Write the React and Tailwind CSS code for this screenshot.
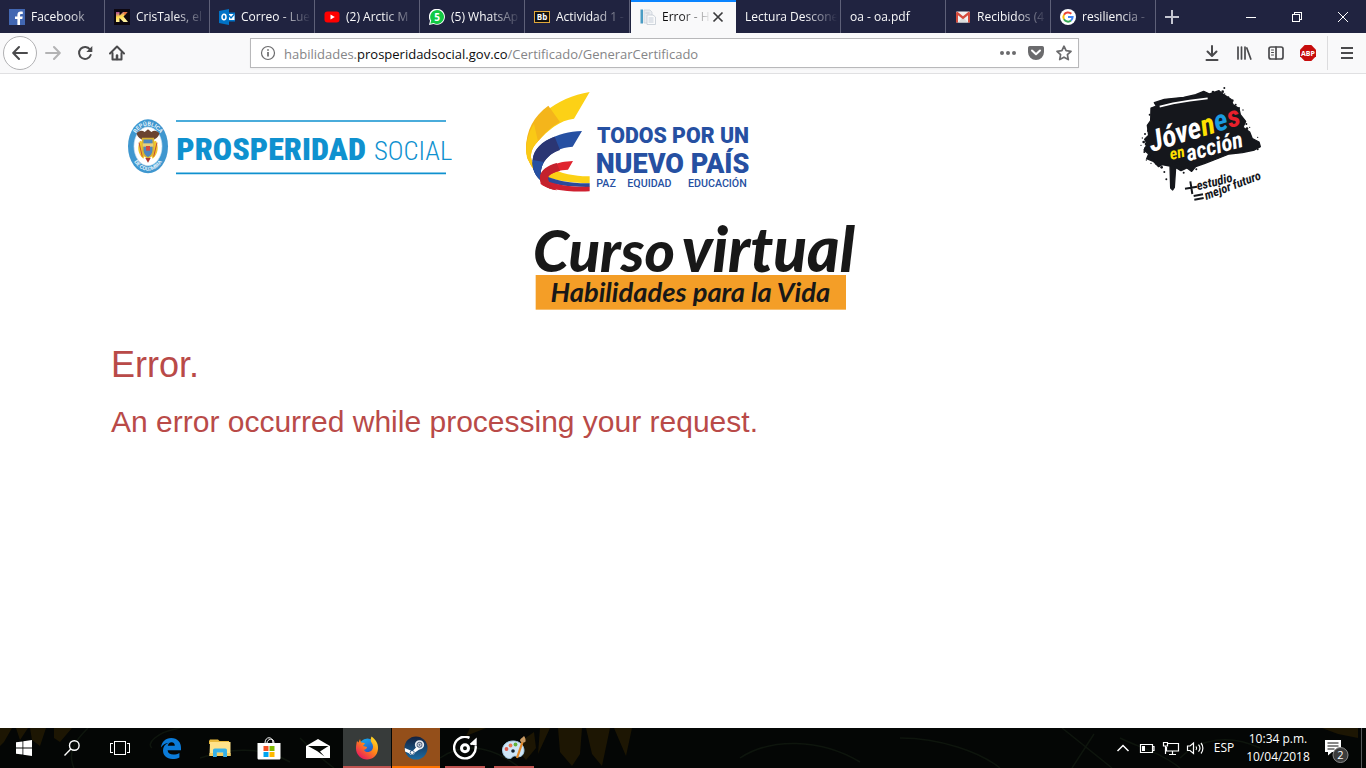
import React from "react";

const uiFont = "font-['Open_Sans','Noto_Sans',sans-serif]";

/* ---------- Tab icons ---------- */

const FacebookIcon = () => (
  <svg viewBox="0 0 16 16" className="size-4 shrink-0" aria-hidden="true">
    <rect width="16" height="16" fill="#4267b2" />
    <path d="M11 16V10h2.3l.4-2.5H11V6.2c0-.8.4-1.3 1.4-1.3h1.4V2.7c-.4-.1-1.1-.2-2-.2C9.700 2.500 8.400 3.700 8.400 5.900v1.600H6V10h2.400v6z" fill="#fff" />
  </svg>
);

const KIcon = () => (
  <svg viewBox="0 0 16 16" className="size-4 shrink-0" aria-hidden="true">
    <defs>
      <linearGradient id="kGrad" x1="0" y1="0" x2="0.3" y2="1">
        <stop offset="0" stopColor="#a33a9c" />
        <stop offset="0.5" stopColor="#ffd84a" />
        <stop offset="1" stopColor="#fff2a0" />
      </linearGradient>
    </defs>
    <rect width="16" height="16" fill="#0d0710" />
    <path d="M2 3h3.500v3.500L9 3h4.500L9.500 7.500 14 13H9.500L5.500 9v4H2z" fill="url(#kGrad)" />
    <path d="M10 3h3.500l-3 3.500z" fill="#e9703b" />
  </svg>
);

const OutlookIcon = () => (
  <svg viewBox="0 0 16 16" className="size-4 shrink-0" aria-hidden="true">
    <rect x="8" y="3.500" width="8" height="9" fill="#0072c6" />
    <path d="M10 5h5.500v6H10z" fill="#fff" />
    <path d="M10 6.500l2 2.500 3.500-4" fill="none" stroke="#0072c6" strokeWidth="1.300" />
    <path d="M0 2l10-2v16L0 14z" fill="#0072c6" />
    <ellipse cx="5" cy="8" rx="2" ry="2.700" fill="none" stroke="#fff" strokeWidth="1.500" />
  </svg>
);

const YoutubeIcon = () => (
  <svg viewBox="0 0 16 16" className="size-4 shrink-0" aria-hidden="true">
    <rect x="0.500" y="2.500" width="15" height="11" rx="3" fill="#f00" />
    <path d="M6.500 5.500v5L10.800 8z" fill="#fff" />
  </svg>
);

const WhatsappIcon = () => (
  <svg viewBox="0 0 16 16" className="size-4 shrink-0" aria-hidden="true">
    <path d="M0 16l1-4.200A8 8 0 1 1 4.500 15z" fill="#fff" />
    <path d="M1.300 14.700l.9-3.100A6.900 6.900 0 1 1 4.700 14z" fill="#12c943" />
    <text x="8" y="11.500" textAnchor="middle" className="font-['Open_Sans',sans-serif] text-[10px] font-bold" fill="#fff">5</text>
  </svg>
);

const BlackboardIcon = () => (
  <svg viewBox="0 0 16 16" className="size-4 shrink-0" aria-hidden="true">
    <rect x="0.500" y="2.500" width="15" height="11" fill="#111" stroke="#e0a83a" />
    <text x="8" y="11" textAnchor="middle" className="font-['Open_Sans',sans-serif] text-[8px] font-bold" fill="#fff">Bb</text>
  </svg>
);

const PageIcon = () => (
  <svg viewBox="0 0 16 16" className="size-4 shrink-0" aria-hidden="true">
    <rect x="0.500" y="0.500" width="2.500" height="14" fill="#4a9cc4" />
    <path d="M4 1h6l2 2v11H4z" fill="#e9ecf0" stroke="#cdd3db" strokeWidth="0.800" />
    <path d="M7 6h6l2.500 2v7.500H7z" fill="#fafbfc" stroke="#c3cad3" strokeWidth="0.800" />
    <path d="M8.500 9h5M8.500 11h5M8.500 13h5M5.500 4h4" stroke="#b9c3cf" strokeWidth="0.800" />
  </svg>
);

const GmailIcon = () => (
  <svg viewBox="0 0 16 16" className="size-4 shrink-0" aria-hidden="true">
    <rect x="1" y="2.500" width="14" height="11" rx="1" fill="#f2f2f2" />
    <path d="M3 13.500L8 8l5 5.500z" fill="#dcdcdc" />
    <path d="M1 3.500v10h2V6.200l5 4 5-4v7.300h2v-10l-1.400-.8L8 7.300 2.400 2.700z" fill="#d54b3d" />
  </svg>
);

const GoogleIcon = () => (
  <svg viewBox="0 0 16 16" className="size-4 shrink-0" aria-hidden="true">
    <circle cx="8" cy="8" r="8" fill="#fff" />
    <g fill="none" strokeWidth="2">
      <path d="M4 5.700A4.600 4.600 0 0 1 11.300 4.800" stroke="#ea4335" />
      <path d="M4 10.300A4.600 4.600 0 0 1 4 5.700" stroke="#fbbc05" />
      <path d="M11 11.500A4.600 4.600 0 0 1 4 10.300" stroke="#34a853" />
      <path d="M8 8.100h4.600A4.600 4.600 0 0 1 11 11.500" stroke="#4285f4" />
    </g>
  </svg>
);

const tabs = [
  { label: "Facebook", Icon: FacebookIcon },
  { label: "CrisTales, el", Icon: KIcon },
  { label: "Correo - Lue", Icon: OutlookIcon },
  { label: "(2) Arctic M", Icon: YoutubeIcon },
  { label: "(5) WhatsAp", Icon: WhatsappIcon },
  { label: "Actividad 1 -", Icon: BlackboardIcon },
  { label: "Error - H", Icon: PageIcon, active: true },
  { label: "Lectura Descone" },
  { label: "oa - oa.pdf" },
  { label: "Recibidos (4", Icon: GmailIcon },
  { label: "resiliencia -", Icon: GoogleIcon },
];

function Tab({ label, Icon, active }) {
  return (
    <div
      className={
        active
          ? "ml-px flex h-full min-w-0 max-w-[105px] flex-1 items-center border-t-2 border-[#0a84ff] bg-[#f9f9fa] pb-[2px] pl-[9px] pr-3 text-[#0c0c0d]"
          : "flex h-full min-w-0 max-w-[105px] flex-1 items-center border-r border-[#5e6078] pl-[9px] pr-[3px] text-[#f9f9fa]"
      }
    >
      <button role="tab" aria-selected={!!active} className="flex min-w-0 flex-1 items-center gap-[6px] text-left">
        {Icon && <Icon />}
        <span className="min-w-0 flex-1 overflow-hidden whitespace-nowrap text-[12px] leading-4 [mask-image:linear-gradient(to_left,transparent,black_32px)]">
          {label}
        </span>
      </button>
      {active && (
        <button aria-label="Cerrar pestaña" className="shrink-0">
          <svg viewBox="0 0 12 12" className="size-3" fill="none" stroke="#3b3b3d" strokeWidth="1.700">
            <path d="M1.500 1.500l9 9M10.500 1.500l-9 9" />
          </svg>
        </button>
      )}
    </div>
  );
}

function TabBar() {
  return (
    <div className="flex h-[33px] bg-[#202340]">
      <div role="tablist" className="flex min-w-0 flex-1">
        {tabs.map((t) => (
          <Tab key={t.label} {...t} />
        ))}
        <button aria-label="Nueva pestaña" className="flex w-8 shrink-0 items-center justify-center">
          <svg viewBox="0 0 14 14" className="size-[14px]" stroke="#c5c6d2" strokeWidth="2">
            <path d="M7 0v14M0 7h14" />
          </svg>
        </button>
      </div>
      <div className="flex shrink-0">
        <button aria-label="Minimizar" className="flex w-[46px] items-center justify-center">
          <svg viewBox="0 0 10 10" className="size-[10px]" stroke="#fff" shapeRendering="crispEdges"><path d="M0 5.500h10" /></svg>
        </button>
        <button aria-label="Restaurar" className="flex w-[46px] items-center justify-center">
          <svg viewBox="0 0 10 10" className="size-[10px]" fill="none" stroke="#fff" shapeRendering="crispEdges">
            <path d="M0.500 2.500h7v7h-7zM2.500 2.500v-2h7v7h-2" />
          </svg>
        </button>
        <button aria-label="Cerrar" className="flex w-[46px] items-center justify-center">
          <svg viewBox="0 0 10 10" className="size-[10px]" stroke="#fff"><path d="M0 0l10 10M10 0L0 10" /></svg>
        </button>
      </div>
    </div>
  );
}

function ToolButton({ label, children, className = "w-8" }) {
  return (
    <button aria-label={label} className={"flex h-8 shrink-0 items-center justify-center text-[#4a4a4c] " + className}>
      <svg viewBox="0 0 16 16" className="size-4" fill="none" stroke="currentColor" strokeWidth="2" strokeLinecap="round" strokeLinejoin="round">
        {children}
      </svg>
    </button>
  );
}

function Toolbar() {
  return (
    <div className="flex h-[41px] items-center border-b border-[#e0e0e2] bg-[#f9f9fa]">
      <div className="flex w-[250px] shrink-0 items-center pl-[3px]">
        <button aria-label="Atrás" className="flex size-[34px] items-center justify-center rounded-full border border-[#b1b1b3] bg-white text-[#4a4a4c]">
          <svg viewBox="0 0 16 16" className="size-4" fill="none" stroke="currentColor" strokeWidth="2" strokeLinecap="round" strokeLinejoin="round">
            <path d="M15 8H1.500M7 2L1.200 8 7 14" />
          </svg>
        </button>
        <button aria-label="Adelante" disabled className="flex size-8 items-center justify-center text-[#b3b3b4]">
          <svg viewBox="0 0 16 16" className="size-4" fill="none" stroke="currentColor" strokeWidth="2" strokeLinecap="round" strokeLinejoin="round">
            <path d="M1 8h13.500M9 2l5.800 6L9 14" />
          </svg>
        </button>
        <ToolButton label="Recargar">
          <path d="M13 4.500A6 6 0 1 0 13.700 10" />
          <path d="M15.300 1v6H9.300z" fill="currentColor" stroke="none" />
        </ToolButton>
        <ToolButton label="Inicio">
          <path d="M1 8.500L8 1.500l7 7" />
          <path d="M3.500 8v6.500h9V8" />
          <path d="M8 14v-3.500" strokeWidth="2.500" />
        </ToolButton>
      </div>
      <div className="flex h-[30px] min-w-0 flex-1 items-center border border-[#b8b8ba] bg-white shadow-xs">
        <button aria-label="Información del sitio" className="flex w-[33px] shrink-0 items-center justify-center">
          <svg viewBox="0 0 16 16" className="size-4" fill="none" stroke="#6b6b6d">
            <circle cx="8" cy="8" r="6.500" strokeWidth="1.200" />
            <path d="M8 7v4.500M8 4.200v1.600" strokeWidth="1.700" />
          </svg>
        </button>
        <div role="textbox" aria-label="Dirección" tabIndex={0} className="min-w-0 flex-1 overflow-hidden whitespace-nowrap pt-px text-[13px] leading-5 text-[#858587]">
          habilidades.<span className="text-[#0c0c0d]">prosperidadsocial.gov.co</span>/Certificado/GenerarCertificado
        </div>
        <button aria-label="Acciones de página" className="flex w-7 shrink-0 items-center justify-center">
          <svg viewBox="0 0 16 16" className="size-4" fill="#6b6b6d">
            <circle cx="2" cy="8" r="2" /><circle cx="8" cy="8" r="2" /><circle cx="14" cy="8" r="2" />
          </svg>
        </button>
        <button aria-label="Guardar en Pocket" className="flex w-7 shrink-0 items-center justify-center">
          <svg viewBox="0 0 16 16" className="size-4">
            <path d="M1.800 1h12.400A1.800 1.800 0 0 1 16 2.800V7a8 8 0 0 1-16 0V2.800A1.800 1.800 0 0 1 1.800 1z" fill="#6b6b6d" />
            <path d="M4 5.500l4 3.800 4-3.800" fill="none" stroke="#fff" strokeWidth="2" strokeLinecap="round" strokeLinejoin="round" />
          </svg>
        </button>
        <button aria-label="Añadir a marcadores" className="flex w-7 shrink-0 items-center justify-center">
          <svg viewBox="0 0 16 16" className="size-4" fill="none" stroke="#6b6b6d" strokeWidth="1.700" strokeLinejoin="round">
            <path d="M8 1.200l2.100 4.500 4.900.6-3.600 3.400.9 4.900L8 12.200l-4.300 2.400.9-4.900L1 6.300l4.900-.6z" />
          </svg>
        </button>
      </div>
      <div className="flex w-[287px] shrink-0 items-center justify-end pr-[3px]">
        <ToolButton label="Descargas"><path d="M8 1v9.500M3.500 6.500L8 11l4.500-4.500M2.500 15h11" /></ToolButton>
        <ToolButton label="Biblioteca">
          <path d="M2 2v12M5.500 2v12M9 2v12M10.800 3l4 11" strokeWidth="1.700" />
        </ToolButton>
        <ToolButton label="Barra lateral">
          <rect x="1" y="2" width="14" height="12" rx="2" strokeWidth="1.700" />
          <path d="M8 2v12" strokeWidth="1.700" />
          <path d="M3.500 5h2M3.500 7.500h2M3.500 10h2" strokeWidth="1" />
        </ToolButton>
        <button aria-label="Adblock Plus" className="flex size-8 items-center justify-center">
          <svg viewBox="0 0 16 16" className="size-4">
            <path d="M4.700 0h6.600L16 4.700v6.600L11.300 16H4.700L0 11.300V4.700z" fill="#c70d0d" />
            <text x="8" y="10.500" textAnchor="middle" className="font-['Open_Sans',sans-serif] text-[7px] font-bold" fill="#fff">ABP</text>
          </svg>
        </button>
        <div className="mx-[3px] h-[34px] w-px bg-[#dcdcde]" />
        <ToolButton label="Menú"><path d="M2 3h12M2 8h12M2 13h12" strokeLinecap="butt" /></ToolButton>
      </div>
    </div>
  );
}

/* ---------- Page logos ---------- */

const ProsperidadLogo = () => (
  <svg viewBox="54 54 972 174" className="h-[58px] w-[324px] shrink-0" role="img" aria-label="Prosperidad Social">
    <defs>
      <path id="sealTop" d="M68 139a46 62 0 0 1 92 0" />
      <path id="sealBottom" d="M60 139a54 73 0 0 0 108 0" />
    </defs>
    <ellipse cx="114" cy="139" rx="60" ry="81" fill="#3f97cf" />
    <ellipse cx="114" cy="139" rx="42" ry="58" fill="#fff" stroke="#cfe3f1" strokeWidth="2" />
    <text className="font-['Roboto',sans-serif] text-[17px] font-bold" fill="#e8f4fb">
      <textPath href="#sealTop" startOffset="50%" textAnchor="middle">REPÚBLICA</textPath>
    </text>
    <text className="font-['Roboto',sans-serif] text-[16px] font-bold" fill="#e8f4fb">
      <textPath href="#sealBottom" startOffset="50%" textAnchor="middle">DE COLOMBIA</textPath>
    </text>
    <path d="M80 100c6-8 16-10 24-4l10-8 10 8c8-6 18-4 24 4-2 12-12 20-24 20h-20c-12 0-22-8-24-20z" fill="#6b4330" />
    <path d="M90 122c-8 18-8 38 10 54l4-8c-8-12-10-28-4-42zM138 122c8 18 8 38-10 54l-4-8c8-12 10-28 4-42z" fill="#f1c62b" />
    <path d="M98 116h32v34c0 12-8 20-16 24-8-4-16-12-16-24z" fill="#4f86bd" stroke="#d9b233" strokeWidth="5" />
    <path d="M98 130h32v10H98z" fill="#e9cf7c" />
    <path d="M108 138h12v14h-12z" fill="#d04a44" />
    <path d="M87 128l10 42M141 128l-10 42" stroke="#c24a3a" strokeWidth="3" />
    <path d="M106 174h16l-8 14z" fill="#b0392f" />
    <path d="M198 63h810M198 220h810" stroke="#0f91cf" strokeWidth="5" />
    <text x="199" y="180" className="font-['Liberation_Sans_Narrow','Roboto_Condensed','Liberation_Sans',sans-serif] text-[96px] font-black" fill="#0f91cf">PROSPERIDAD</text>
    <text x="792" y="180" className="font-['Liberation_Sans_Narrow','Roboto_Condensed','Lato',sans-serif] text-[80px] font-light" fill="#0f91cf">SOCIAL</text>
  </svg>
);

const NuevoPaisLogo = () => (
  <svg viewBox="48 30 672 309" className="h-[103px] w-[224px] shrink-0" role="img" aria-label="Todos por un nuevo país">
    <path d="M115 262C155 282 200 290 239 289V310C180 309 120 300 90 282z" fill="#fcd116" />
    <path d="M90 280C130 302 185 311 239 310V321C170 322 115 312 90 298z" fill="#2b4a9a" />
    <path d="M90 294C130 315 185 322 239 320V334C170 337 110 328 92 312z" fill="#cf2030" />
    <path d="M239 36C140 52 48 120 48 208C50 236 62 258 76 274L68 250C57 225 64 204 84 184C112 152 150 120 192 116z" fill="#fcd116" />
    <path d="M115 77C72 108 48 150 48 208C50 236 62 258 76 274L68 250C57 225 64 204 84 184C102 163 122 140 150 126z" fill="#f4b51b" />
    <path d="M72 132C52 160 44 210 52 236L76 274L68 250C57 225 64 204 84 184z" fill="#fac916" />
    <path d="M216 153C140 156 72 190 68 240C66 268 76 288 93 302C90 285 92 262 102 246C122 216 152 202 188 200z" fill="#2650a2" />
    <path d="M134 170C95 184 70 208 68 240C66 268 76 288 93 302C90 285 92 262 102 246C114 228 130 217 150 210z" fill="#2b3673" />
    <path d="M68 240C66 268 76 288 93 302C90 285 92 262 102 246z" fill="#2650a2" />
    <path d="M189 243C142 244 96 262 90 290C87 310 108 325 140 331C118 316 110 300 116 288C128 276 150 270 174 269z" fill="#e0242f" />
    <path d="M140 249C112 257 93 270 90 290C87 310 108 325 140 331C118 316 110 300 116 288C123 281 136 276 150 273z" fill="#c4222d" />
    <text x="261" y="189" className="font-['Roboto',sans-serif] text-[64px] font-black" fill="#2650a2">TODOS POR UN</text>
    <text x="257" y="278" className="font-['Roboto',sans-serif] text-[81px] font-black" fill="#2650a2">NUEVO PAÍS</text>
    <g className="font-['Roboto',sans-serif] text-[32px] font-medium" fill="#2650a2">
      <text x="259" y="322">PAZ</text>
      <text x="352" y="322">EQUIDAD</text>
      <text x="534" y="322">EDUCACIÓN</text>
    </g>
  </svg>
);

const splatter = [
  [284, 24, 3], [279, 35, 4], [285, 42, 2], [272, 46, 3], [308, 62, 4], [318, 74, 3], [328, 84, 3], [340, 90, 2],
  [56, 152, 4], [46, 162, 3], [38, 174, 2], [52, 178, 4], [34, 196, 2], [46, 205, 3], [60, 226, 4], [50, 240, 2],
  [72, 238, 4], [86, 244, 3], [96, 262, 4], [104, 276, 3], [138, 262, 4], [146, 248, 5], [158, 262, 3], [172, 252, 4],
  [186, 268, 3], [200, 268, 3], [66, 118, 4], [60, 104, 3], [70, 84, 3], [384, 172, 2], [384, 208, 3], [352, 146, 4],
  [350, 132, 3], [360, 142, 2], [110, 298, 3], [126, 318, 3], [162, 278, 3], [64, 250, 2], [250, 36, 4], [296, 52, 3],
  [42, 186, 4], [50, 192, 5], [56, 206, 4], [44, 216, 3], [68, 228, 5], [80, 252, 3], [132, 250, 5], [150, 268, 3],
];

const JovenesLogo = () => (
  <svg viewBox="25 15 372 351" className="h-[117px] w-[124px] shrink-0" role="img" aria-label="Jóvenes en acción">
    <path
      d="M64 84l16-6-6-10 30-10 58-6 36-8 24-10 18 8 28-10 14 12 22 14 6 16 18 12 4 18 16 20-8 18 20 14 8 20 20 10 4 14-18 10-36 8-40 4-30 12-42 16-28 10-12 14-14-10-18 8-16-10-4 60-5 8-6-6-2-66-24-4-10 6-16-16-20-8 6-14-14-12 10-18-8-14 12-12-4-30 10-14z"
      fill="#15171c" stroke="#15171c" strokeWidth="4" strokeLinejoin="round"
    />
    <path d="M90 80l40-10 50-8 54-7" fill="none" stroke="#fff" strokeWidth="5" />
    <path d="M254 242c30-6 54-12 88-20l-32 14-50 8z" fill="#fff" />
    <g fill="#15171c">
      {splatter.map(([x, y, r]) => (
        <circle key={x + "-" + y} cx={x} cy={y} r={r} />
      ))}
    </g>
    <g className="font-['Liberation_Sans_Narrow','Roboto_Condensed','Liberation_Sans',sans-serif] font-bold italic">
      <text x="66" y="216" className="text-[88px]" transform="rotate(-17 66 216)">
        <tspan fill="#fff">Jóve</tspan>
        <tspan fill="#ffe000">n</tspan>
        <tspan fill="#1a9be0">e</tspan>
        <tspan fill="#e8202c">s</tspan>
      </text>
      <text x="124" y="240" className="text-[48px]" fill="#ffe000" transform="rotate(-14 124 240)">en</text>
      <text x="176" y="244" className="text-[68px]" fill="#fff" transform="rotate(-15 176 244)">acción</text>
      <text x="204" y="331" className="text-[38px]" fill="#15171c" transform="rotate(-14 204 331)">estudio</text>
      <text x="230" y="360" className="text-[37px]" fill="#15171c" transform="rotate(-21 230 360)">mejor futuro</text>
    </g>
    <path d="M166 326l36-6M182 304l6 38M192 348l28-5M194 359l28-5" stroke="#15171c" strokeWidth="6" />
  </svg>
);

const CursoLogo = () => (
  <svg viewBox="40 30 972 276" className="h-[92px] w-[324px] overflow-visible" role="img" aria-label="Curso virtual Habilidades para la Vida">
    <rect x="48" y="195" width="931" height="104" fill="#f49e27" />
    <g className="font-['Lato',sans-serif] font-black italic" fill="#181818">
      <text x="40" y="186" className="text-[174px]">Curso</text>
      <text x="486" y="186" className="text-[186px]">virtual</text>
    </g>
    <text x="512" y="276" textAnchor="middle" className="font-['Lato',sans-serif] text-[82px] font-bold italic" fill="#181818">Habilidades para la Vida</text>
  </svg>
);

function Page() {
  return (
    <main className="flex-1 bg-white pt-[11px] font-['Liberation_Sans',Arial,sans-serif] text-[#b94a48]">
      <div className="flex items-start pl-32 pr-[104px]">
        <div className="pt-[33px]"><ProsperidadLogo /></div>
        <div className="w-[74px] shrink" />
        <div className="pt-[5px]"><NuevoPaisLogo /></div>
        <div className="flex-1" />
        <JovenesLogo />
      </div>
      <div className="mt-[18px] flex justify-center pl-6">
        <CursoLogo />
      </div>
      <div className="px-[111px] pt-[33px]">
        <h1 className="text-[36px] leading-10">Error.</h1>
        <h2 className="mt-5 text-[30px] leading-[33px]">An error occurred while processing your request.</h2>
      </div>
    </main>
  );
}

/* ---------- Taskbar ---------- */

const Wallpaper = () => (
  <svg viewBox="0 0 1366 40" preserveAspectRatio="xMidYMid slice" className="absolute inset-0 size-full" aria-hidden="true">
    <rect width="1366" height="40" fill="#040605" />
    <g fill="#1d1603">
      <path d="M0 0h12l-8 14-4 4zM16 0h12l-8 12zM30 0h16l-6 18-8-6zM54 0h18l-12 14-6-4z" />
      <path d="M470 0h16l-20 8zM514 18l20-14 2 16-10 12zM540 0h10l-12 26z" />
      <path d="M558 0h24l-2 26-8 12-12-14zM586 0h24l-8 38-10-12zM614 0h18l-6 28z" />
      <path d="M1322 0h36v10l-20-4z" />
    </g>
    <g fill="none" stroke="#0e150d" strokeWidth="1.500">
      <path d="M74 40c-8-18 4-30 14-40M180 0c-24 4-34 16-28 20M200 30c24-8 60-14 90 4M300 10c10 10 20 20 34 30M440 30c30-20 60-6 80 10M1062 0l50 40M1072 40l22-34M1120 10c20 10 40 14 60 30M1180 30c20-20 50-24 80-10M740 30c30-20 80-20 120 4M900 10c40 0 80 14 100 30" />
    </g>
  </svg>
);

const WindowsIcon = () => (
  <svg viewBox="0 0 16 16" className="size-4" fill="#fff">
    <path d="M0 2.300l6.500-.9v6.200H0zM7.300 1.300L16 0v7.600H7.300zM0 8.400h6.500v6.200L0 13.700zM7.300 8.400H16V16l-8.700-1.300z" />
  </svg>
);
const SearchIcon = () => (
  <svg viewBox="0 0 16 16" className="size-4" fill="none" stroke="#fff" strokeWidth="1.400">
    <circle cx="10.300" cy="5.500" r="4.800" /><path d="M6.800 9L.5 15.500" />
  </svg>
);
const TaskViewIcon = () => (
  <svg viewBox="0 0 20 16" className="h-4 w-5" fill="none" stroke="#fff" strokeWidth="1" shapeRendering="crispEdges">
    <path d="M4.500 1.500h11v13h-11zM3 3.500H.5v9H3M17 3.500h2.500v9H17" />
  </svg>
);
const EdgeIcon = () => (
  <svg viewBox="0 0 20 21" className="h-[21px] w-5" fill="#0b7bd9">
    <path d="M0 9.500C.6 3.900 4.600 0 10.200 0 16.600 0 20 4.500 20 9.800v2.400H6.600c.2 2.900 2.600 4.300 5.800 4.300 2.300 0 4.300-.6 6-1.600v4.500c-1.900 1-4.300 1.600-7.100 1.600C5.700 21 2 17.500 2 12.600 2 9 4 6.300 7.600 4.800 4.400 5.200 1.700 6.900 0 9.500zm6.800-1.700h7c0-2.300-1.100-3.600-3.200-3.600-2.100 0-3.500 1.500-3.800 3.600z" />
  </svg>
);
const ExplorerIcon = () => (
  <svg viewBox="0 0 22 20" className="h-5 w-[22px]">
    <path d="M0 3l1-1.500h8L10.500 3H20v3H0z" fill="#e9b93c" />
    <path d="M1 4h20.500v14H.5z" fill="#ffe28a" />
    <path d="M.5 15h21v3H.5z" fill="#f4cd62" />
    <path d="M4 19v-6.500c0-1.300.6-2 1.800-2h10.400c1.200 0 1.800.7 1.800 2V19h-3.800v-4.500H7.800V19z" fill="#36b1e8" />
  </svg>
);
const StoreIcon = () => (
  <svg viewBox="0 0 24 24" className="size-6">
    <path d="M8 7c0-7 8-7 8 0M10 7c0-4 7-6 7 0" fill="none" stroke="#fff" strokeWidth="1" />
    <path d="M.5 7h23v15c0 1-.6 1.500-1.500 1.500H2c-1 0-1.500-.5-1.500-1.500z" fill="#fff" />
    <path d="M6.500 10h5v5h-5z" fill="#f25022" /><path d="M12.500 10h5v5h-5z" fill="#7fba00" />
    <path d="M6.500 16h5v5h-5z" fill="#00a4ef" /><path d="M12.500 16h5v5h-5z" fill="#ffb900" />
  </svg>
);
const MailIcon = () => (
  <svg viewBox="0 0 24 19" className="h-[19px] w-6">
    <path d="M0 7L12 0l12 7v12H0z" fill="#fff" />
    <path d="M2 7h20.500L14 12.500l4.500 5L11 12z" fill="#070a07" />
  </svg>
);
const FirefoxIcon = () => (
  <svg viewBox="0 0 24 24" className="size-6">
    <defs>
      <linearGradient id="ffOuter" x1="0.900" y1="0.050" x2="0.200" y2="0.950">
        <stop offset="0" stopColor="#ffe226" /><stop offset="0.450" stopColor="#ff8a16" /><stop offset="1" stopColor="#e9175f" />
      </linearGradient>
      <linearGradient id="ffGlobe" x1="0" y1="0" x2="0.500" y2="1">
        <stop offset="0" stopColor="#13b5f5" /><stop offset="1" stopColor="#2a45b8" />
      </linearGradient>
    </defs>
    <circle cx="12.500" cy="11.500" r="9" fill="url(#ffGlobe)" />
    <path d="M2 5l1.500 1.500L5 3l1 3.500c1.500 0 3 .3 4 1L8 10l4 1c0 2-2 2-3 3 1 2.500 5.500 3 8 0 1.500-2 1.500-5-.5-7.500C15 5 16 2 16.500.5 20 3 23.500 7 23 13c-.5 6.500-5.500 10.500-11 10.500S1 19 1 12.500C1 9.500 1.500 7 2 5z" fill="url(#ffOuter)" />
  </svg>
);
const SteamIcon = () => (
  <svg viewBox="0 0 24 24" className="size-6">
    <defs>
      <linearGradient id="steamBg" x1="0" y1="0" x2="0" y2="1">
        <stop offset="0" stopColor="#14213e" /><stop offset="1" stopColor="#1a6ba2" />
      </linearGradient>
    </defs>
    <circle cx="12" cy="12" r="11.500" fill="url(#steamBg)" />
    <circle cx="15.500" cy="8.800" r="3.800" fill="#5a6a85" stroke="#e8edf2" strokeWidth="1.700" />
    <circle cx="15.500" cy="8.800" r="1.500" fill="none" stroke="#e8edf2" />
    <path d="M.8 12l7.500 3.200 4.500-4.500 2.800 2.500-4.600 3.300A3.200 3.200 0 0 1 5 17.300L1 15.500z" fill="#fff" />
    <circle cx="8.200" cy="16.500" r="2" fill="none" stroke="#28517c" strokeWidth="0.800" />
  </svg>
);
const GrooveIcon = () => (
  <svg viewBox="0 0 24 24" className="size-6" fill="none" stroke="#fff">
    <path d="M16.500 1.800A10.800 10.800 0 1 0 22.600 10" strokeWidth="2.400" />
    <path d="M17.500 8.500L22.800 3.500V9.500" strokeWidth="1.800" fill="#fff" />
    <circle cx="12" cy="12.300" r="3.500" strokeWidth="3" />
  </svg>
);
const PaintIcon = () => (
  <svg viewBox="0 0 24 24" className="size-6">
    <path d="M11 5C5 5 .5 9 .5 14S4 22.500 7.500 22.500c3 0 2.500-2.500 5-2.500s4.500 2 7.500-.5c2-2 2.500-5 1.500-8C20 7.500 16 5 11 5z" fill="#cfe6f7" stroke="#a5cbe6" />
    <circle cx="4.500" cy="13" r="1.900" fill="#df5a4c" /><circle cx="8.500" cy="9.500" r="1.900" fill="#e87850" />
    <circle cx="13.500" cy="8.500" r="1.900" fill="#62b43a" />
    <circle cx="11" cy="15" r="1.800" fill="#15212e" />
    <path d="M20.500 6L15 22" stroke="#e28a2b" strokeWidth="2.300" />
    <path d="M18 4.500c0-2 2.500-2.500 4-4.500 1 1 2 3.500 1.500 5.500-1 1.500-4.500 1.500-5.500-1z" fill="#c99a63" />
  </svg>
);

const pinned = [
  { label: "Microsoft Edge", Icon: EdgeIcon },
  { label: "Explorador de archivos", Icon: ExplorerIcon },
  { label: "Microsoft Store", Icon: StoreIcon },
  { label: "Correo", Icon: MailIcon },
  { label: "Firefox", Icon: FirefoxIcon, bg: "bg-[#373b3a]", line: "w-12 bg-[#bf5350]" },
  { label: "Steam", Icon: SteamIcon, bg: "bg-[#944f1a]", line: "w-12 bg-[#ff7300]" },
  { label: "Groove Música", Icon: GrooveIcon, line: "w-10 bg-[#bf5350]" },
  { label: "Paint", Icon: PaintIcon, line: "w-10 bg-[#bf5350]" },
];

function TaskButton({ label, Icon, bg = "", line = "" }) {
  return (
    <button aria-label={label} className={"flex h-10 w-12 shrink-0 flex-col items-center " + bg}>
      <span className="flex flex-1 items-center pt-[2px]"><Icon /></span>
      <span className={"h-[2px] " + line} />
    </button>
  );
}

const TrayIcon = ({ label, children }) => (
  <button aria-label={label} className="flex w-6 items-center justify-center">
    <svg viewBox="0 0 18 16" className="h-4 w-[18px]" fill="none" stroke="#fff" strokeWidth="1.200">{children}</svg>
  </button>
);

function Taskbar() {
  return (
    <footer className="relative h-10 overflow-hidden text-white">
      <Wallpaper />
      <div className="relative flex h-full items-stretch">
        <TaskButton label="Inicio" Icon={WindowsIcon} />
        <TaskButton label="Buscar" Icon={SearchIcon} />
        <TaskButton label="Vista de tareas" Icon={TaskViewIcon} />
        <div className="ml-[3px] flex gap-px">
          {pinned.map((p) => (
            <TaskButton key={p.label} {...p} />
          ))}
        </div>
        <div className="ml-auto flex items-stretch">
          <TrayIcon label="Mostrar iconos ocultos"><path d="M3.500 11L9 5.500l5.500 5.500" strokeWidth="1.500" /></TrayIcon>
          <TrayIcon label="Batería">
            <path d="M2.500 4.500h12v8h-12zM14.500 6.500H16v4h-1.500" /><path d="M4 6h3v5H4z" fill="#fff" stroke="none" />
          </TrayIcon>
          <TrayIcon label="Red">
            <path d="M6 3.500h10.500v7.500H4.500V7M10.500 11v3M7 14.500h7" /><path d="M1.500 2.500h4v3.500h-4zM3.500 6v8" />
          </TrayIcon>
          <TrayIcon label="Volumen">
            <path d="M1.500 6v4.500H4l3.500 3V3L4 6z" /><path d="M10 6.500c.8 1 .8 2.500 0 3.500M12.500 4.700c1.700 2 1.700 5 0 7M15 3c2.500 3 2.500 7.500 0 10.500" />
          </TrayIcon>
          <button className="w-[34px] text-center text-[12px] leading-4">ESP</button>
          <button className="flex w-[74px] flex-col justify-center text-center text-[12px] leading-[18px]">
            <span>10:34 p.m.</span>
            <span>10/04/2018</span>
          </button>
          <button aria-label="Centro de actividades, 2 notificaciones" className="mr-[11px] flex w-[35px] items-center justify-end pt-1">
            <svg viewBox="0 0 26 26" className="size-[26px]">
              <path d="M1 3h16v12H8l-4 3.500V15H1z" fill="#fff" />
              <path d="M3.500 6h11M3.500 9h11M3.500 12h7" stroke="#111" />
              <circle cx="16.500" cy="18" r="7.500" fill="#3c3c3c" stroke="#8b8b8b" />
              <text x="16.500" y="22" textAnchor="middle" className="font-['Open_Sans',sans-serif] text-[11px]" fill="#fff">2</text>
            </svg>
          </button>
          <div className="mr-1 w-px bg-[#55585a]" />
        </div>
      </div>
    </footer>
  );
}

export default function App() {
  return (
    <div className={"flex min-h-screen flex-col bg-white " + uiFont}>
      <header>
        <TabBar />
        <Toolbar />
      </header>
      <Page />
      <Taskbar />
    </div>
  );
}
